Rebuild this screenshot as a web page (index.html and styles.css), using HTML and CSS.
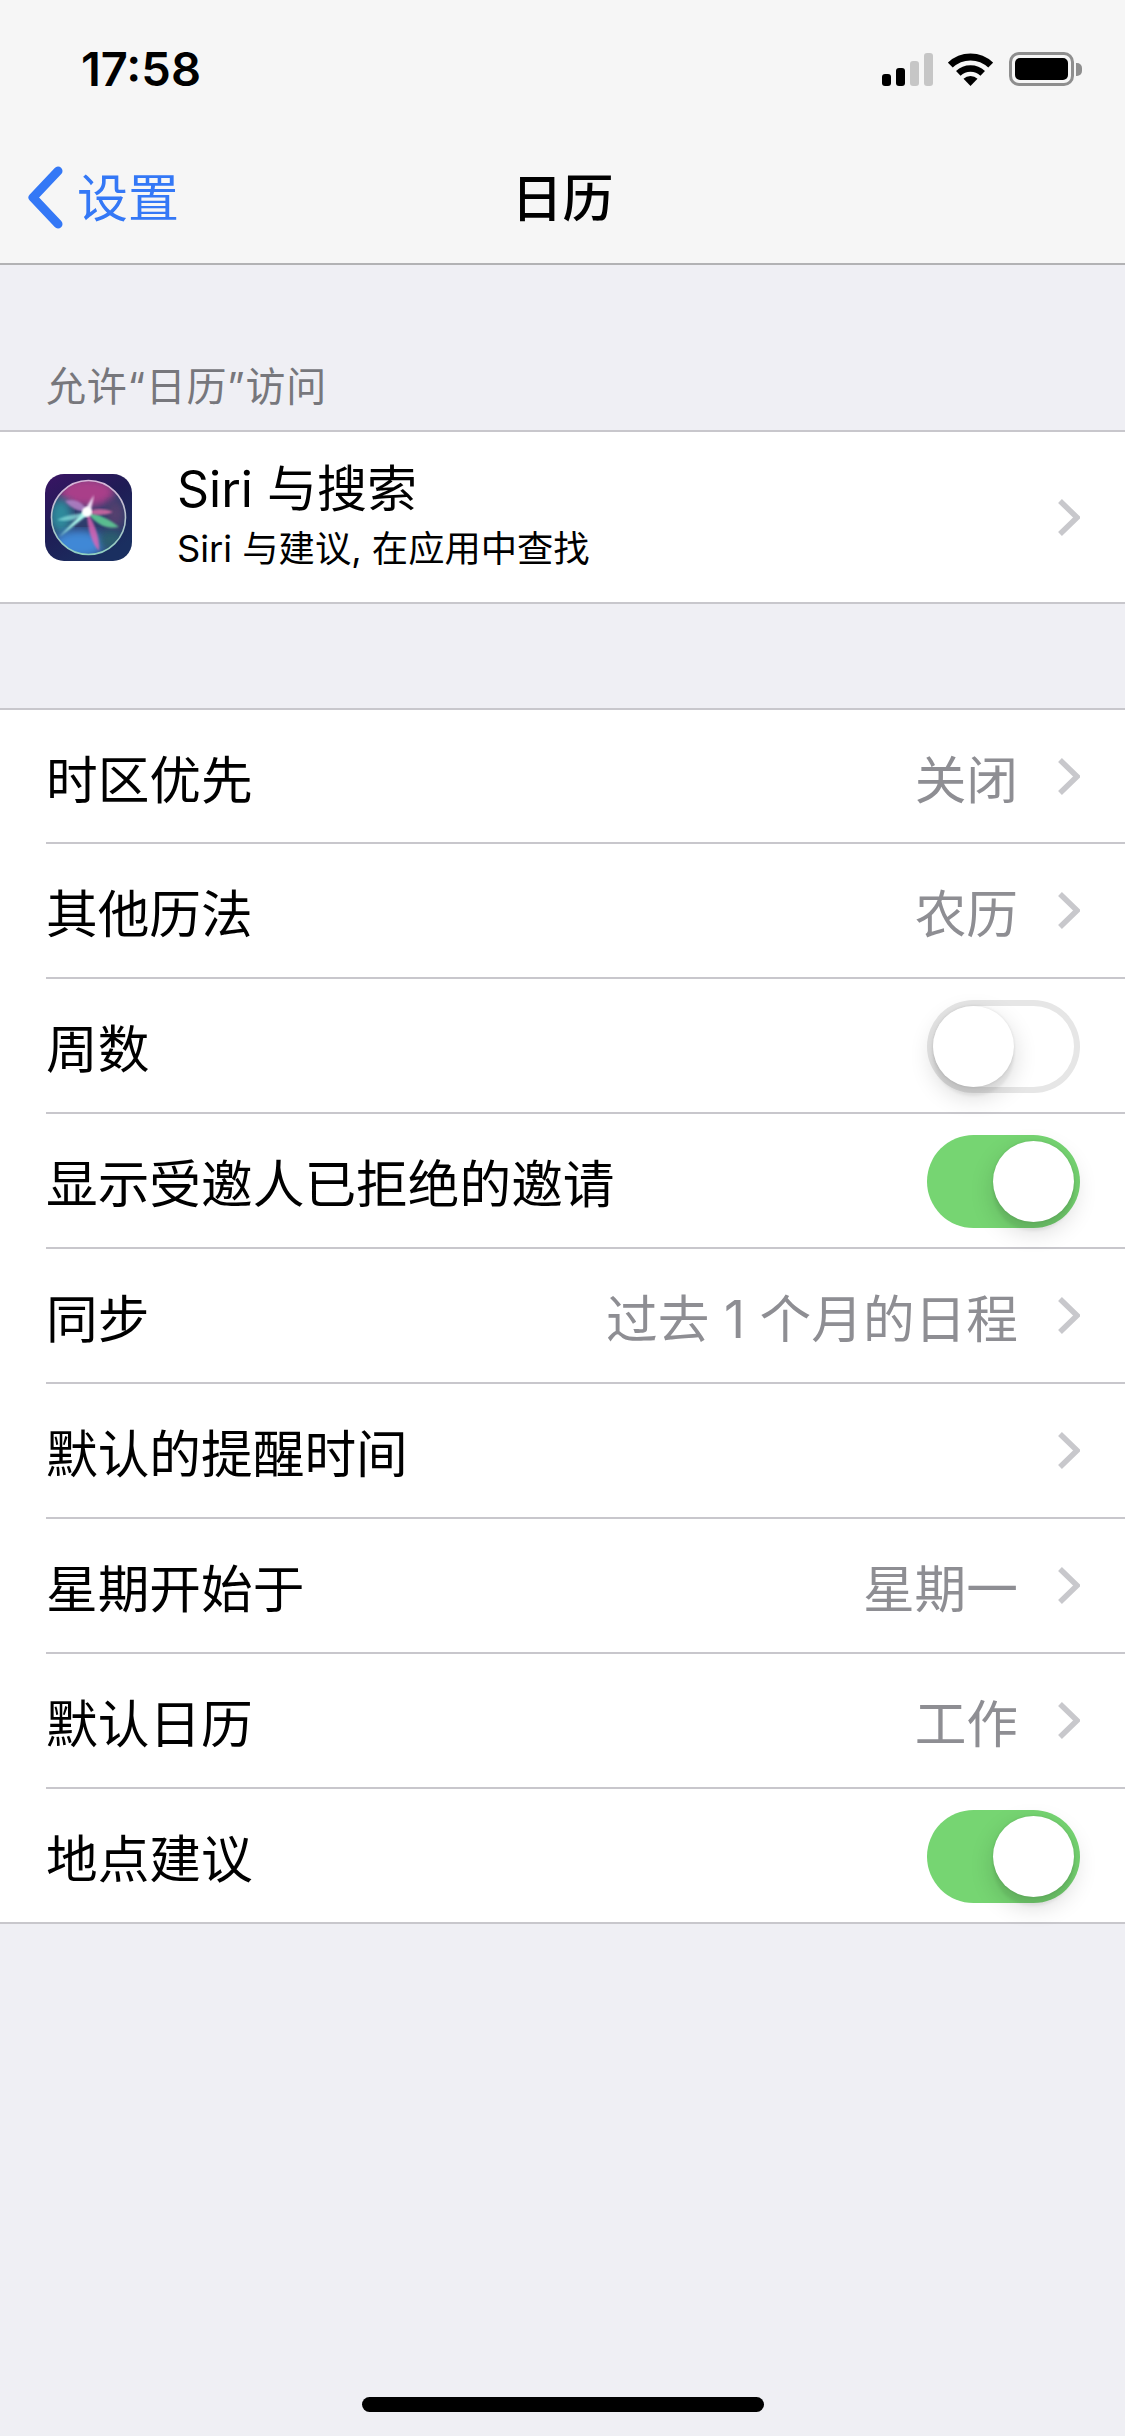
FILE: index.html
```html
<!DOCTYPE html>
<html lang="zh-CN">
<head>
    <meta charset="UTF-8">
    <title>日历</title>
    <link rel="stylesheet" href="styles.css">
</head>
<body>
<div class="page">

    <!-- Status bar + nav -->
    <header class="top">
        <div class="status">
            <span class="time">17:58</span>
            <div class="status-icons">
                <div class="signal">
                    <i class="bar bar-1"></i>
                    <i class="bar bar-2"></i>
                    <i class="bar bar-3"></i>
                    <i class="bar bar-4"></i>
                </div>
                <svg class="wifi" viewBox="0 0 45 33" width="45" height="33">
                    <path d="M2.3 12.1A29 29 0 0 1 42.7 12.1" fill="none" stroke="#000" stroke-width="7"/>
                    <path d="M10.3 20.4A17.5 17.5 0 0 1 34.7 20.4" fill="none" stroke="#000" stroke-width="6.5"/>
                    <path d="M22.5 33L15.5 25.8A10 10 0 0 1 29.5 25.8Z" fill="#000"/>
                </svg>
                <div class="battery">
                    <div class="battery-body"><div class="battery-fill"></div></div>
                    <div class="battery-cap"></div>
                </div>
            </div>
        </div>
        <nav class="nav">
            <div class="back">
                <svg class="back-arrow" viewBox="0 0 36 63" width="36" height="63">
                    <path d="M31 5L6 31.5L31 58" fill="none" stroke="#3478f6" stroke-width="9" stroke-linecap="round" stroke-linejoin="round"/>
                </svg>
                <span class="back-text">设置</span>
            </div>
            <h1 class="nav-title">日历</h1>
        </nav>
    </header>

    <main class="content">
        <div class="section-label">允许“日历”访问</div>
        <section class="group">
            <div class="siri-row">
                <svg class="siri-icon" viewBox="0 0 87 87" width="87" height="87">
                    <defs>
                        <linearGradient id="siriBg" x1="0" y1="0" x2="0.6" y2="1">
                            <stop offset="0" stop-color="#3a1464"/>
                            <stop offset="0.5" stop-color="#1f1c55"/>
                            <stop offset="1" stop-color="#1a2f60"/>
                        </linearGradient>
                        <linearGradient id="siriRing" x1="0" y1="0" x2="0" y2="1">
                            <stop offset="0" stop-color="#d8b4d8"/>
                            <stop offset="1" stop-color="#8fd0c0"/>
                        </linearGradient>
                        <filter id="blur4"><feGaussianBlur stdDeviation="4"/></filter>
                        <filter id="blur1"><feGaussianBlur stdDeviation="1.2"/></filter>
                        <filter id="blur05"><feGaussianBlur stdDeviation="0.8"/></filter>
                        <clipPath id="orbClip"><circle cx="43.5" cy="43.5" r="37"/></clipPath>
                    </defs>
                    <rect width="87" height="87" rx="19" fill="url(#siriBg)"/>
                    <circle cx="43.5" cy="43.5" r="37" fill="#2d3c6c"/>
                    <g clip-path="url(#orbClip)">
                        <ellipse cx="42" cy="18" rx="28" ry="15" fill="#c0408f" opacity="0.85" filter="url(#blur4)"/>
                        <ellipse cx="16" cy="42" rx="11" ry="17" fill="#2d8a9c" filter="url(#blur4)"/>
                        <ellipse cx="34" cy="70" rx="26" ry="14" fill="#3f88d6" filter="url(#blur4)"/>
                        <ellipse cx="70" cy="40" rx="9" ry="14" fill="#55406e" filter="url(#blur4)"/>
                        <ellipse cx="66" cy="66" rx="12" ry="10" fill="#2a5f70" filter="url(#blur4)"/>
                        <path d="M20 27C30 24 38 28 43 38C34 38 26 34 20 27Z" fill="#b184c8" opacity="0.85" filter="url(#blur1)"/>
                        <path d="M42 38C54 40 66 46 74 53C62 56 50 50 42 38Z" fill="#5fcb94" opacity="0.9" filter="url(#blur1)"/>
                        <path d="M42 38C50 50 55 64 54 77C47 70 42 54 42 38Z" fill="#e463b4" opacity="0.8" filter="url(#blur1)"/>
                        <path d="M42 38C50 34 60 34 68 38C60 42 50 42 42 38Z" fill="#ef73ad" opacity="0.75" filter="url(#blur1)"/>
                        <path d="M12 46C22 41 32 39 42 39C34 46 22 48 12 46Z" fill="#8fe7e2" opacity="0.7" filter="url(#blur1)"/>
                        <path d="M14 63L40 36L44 40Z" fill="#a9f5ea" filter="url(#blur05)"/>
                        <path d="M49 21L39 37L45 40Z" fill="#f1e2f7" filter="url(#blur05)"/>
                        <circle cx="42" cy="38" r="5" fill="#fff" filter="url(#blur1)"/>
                    </g>
                    <circle cx="43.5" cy="43.5" r="37" fill="none" stroke="url(#siriRing)" stroke-width="1.6"/>
                </svg>
                <div class="siri-text">
                    <div class="siri-title">Siri 与搜索</div>
                    <div class="siri-sub">Siri 与建议, 在应用中查找</div>
                </div>
                <svg class="chev" viewBox="0 0 23 39" width="23" height="39"><path d="M3 3L20 19.5L3 36" fill="none" stroke="#c8c8cc" stroke-width="5.5"/></svg>
            </div>
        </section>

        <section class="group group-list">
            <div class="row">
                <span class="row-label">时区优先</span>
                <span class="row-value">关闭</span>
                <svg class="chev" viewBox="0 0 23 39" width="23" height="39"><path d="M3 3L20 19.5L3 36" fill="none" stroke="#c8c8cc" stroke-width="5.5"/></svg>
            </div>
            <div class="row">
                <span class="row-label">其他历法</span>
                <span class="row-value">农历</span>
                <svg class="chev" viewBox="0 0 23 39" width="23" height="39"><path d="M3 3L20 19.5L3 36" fill="none" stroke="#c8c8cc" stroke-width="5.5"/></svg>
            </div>
            <div class="row">
                <span class="row-label">周数</span>
                <div class="toggle"><div class="knob"></div></div>
            </div>
            <div class="row">
                <span class="row-label">显示受邀人已拒绝的邀请</span>
                <div class="toggle toggle-on"><div class="knob"></div></div>
            </div>
            <div class="row">
                <span class="row-label">同步</span>
                <span class="row-value">过去 1 个月的日程</span>
                <svg class="chev" viewBox="0 0 23 39" width="23" height="39"><path d="M3 3L20 19.5L3 36" fill="none" stroke="#c8c8cc" stroke-width="5.5"/></svg>
            </div>
            <div class="row">
                <span class="row-label">默认的提醒时间</span>
                <svg class="chev" viewBox="0 0 23 39" width="23" height="39"><path d="M3 3L20 19.5L3 36" fill="none" stroke="#c8c8cc" stroke-width="5.5"/></svg>
            </div>
            <div class="row">
                <span class="row-label">星期开始于</span>
                <span class="row-value">星期一</span>
                <svg class="chev" viewBox="0 0 23 39" width="23" height="39"><path d="M3 3L20 19.5L3 36" fill="none" stroke="#c8c8cc" stroke-width="5.5"/></svg>
            </div>
            <div class="row">
                <span class="row-label">默认日历</span>
                <span class="row-value">工作</span>
                <svg class="chev" viewBox="0 0 23 39" width="23" height="39"><path d="M3 3L20 19.5L3 36" fill="none" stroke="#c8c8cc" stroke-width="5.5"/></svg>
            </div>
            <div class="row">
                <span class="row-label">地点建议</span>
                <div class="toggle toggle-on"><div class="knob"></div></div>
            </div>
        </section>
    </main>

    <div class="home-area"><div class="home-bar"></div></div>
</div>
</body>
</html>
```

FILE: styles.css
```css
body {
    margin: 0;
    font-family: Inter, "Noto Sans CJK SC", sans-serif;
    color: #000;
    background-color: #efeff4;
}
.page {
    width: 1125px;
    height: 2436px;
    display: flex;
    flex-direction: column;
    overflow: hidden;
}

/* Status bar + nav */
.top {
    background-color: #f6f6f6;
    border-bottom: 2px solid #b2b2b4;
    height: 265px;
    box-sizing: border-box;
}
.status {
    height: 132px;
    padding: 45px 43px 0 81px;
    box-sizing: border-box;
    display: flex;
    justify-content: space-between;
    align-items: flex-start;
}
.time {
    font-size: 47px;
    line-height: 48px;
    font-weight: 600;
}
.status-icons {
    display: flex;
    align-items: flex-end;
    margin-top: 7px;
}
.signal {
    display: flex;
    align-items: flex-end;
    gap: 5px;
    height: 33px;
    margin-right: 15px;
}
.bar {
    display: block;
    width: 9px;
    border-radius: 3px;
    background-color: #000;
}
.bar-1 { height: 12px; }
.bar-2 { height: 18px; }
.bar-3 { height: 25px; background-color: #c6c6c6; }
.bar-4 { height: 33px; background-color: #c6c6c6; }
.battery {
    display: flex;
    align-items: center;
    margin-left: 16px;
}
.battery-body {
    width: 65px;
    height: 34px;
    box-sizing: border-box;
    border: 3px solid #8e8e8e;
    border-radius: 10px;
    padding: 3px;
}
.battery-fill {
    height: 100%;
    background-color: #000;
    border-radius: 5px;
}
.battery-cap {
    width: 6px;
    height: 13px;
    margin-left: 2px;
    background-color: #8e8e8e;
    border-radius: 0 5px 5px 0;
}
.nav {
    height: 131px;
    display: grid;
    grid-template-columns: 1fr auto 1fr;
    align-items: center;
}
.back {
    display: flex;
    align-items: center;
    padding-left: 27px;
    gap: 14px;
    font-size: 51px;
    color: #3478f6;
}
.back-arrow {
    display: block;
}
.back-text {
    padding-bottom: 5px;
}
.nav-title {
    margin: 0;
    padding-bottom: 5px;
    font-size: 51px;
    font-weight: 500;
}

/* Lists */
.content {
    flex: 1;
}
.section-label {
    height: 165px;
    box-sizing: border-box;
    padding: 0 46px 18px;
    display: flex;
    align-items: flex-end;
    font-size: 40px;
    line-height: 50px;
    letter-spacing: 0.7px;
    color: #77777c;
}
.group {
    background-color: #fff;
    border-top: 2px solid #c8c7cc;
    border-bottom: 2px solid #c8c7cc;
}
.group-list {
    margin-top: 104px;
}
.siri-row {
    height: 170px;
    display: flex;
    align-items: center;
    padding: 0 45px;
}
.siri-icon {
    display: block;
    flex: none;
    margin-right: 45px;
}
.siri-text {
    flex: 1;
    padding-bottom: 5px;
}
.siri-title {
    font-size: 50px;
    line-height: 69px;
}
.siri-sub {
    font-size: 36.3px;
    line-height: 50px;
}
.chev {
    display: block;
    flex: none;
}
.row {
    height: 135px;
    box-sizing: border-box;
    margin-left: 46px;
    padding-right: 45px;
    border-bottom: 2px solid #c8c7cc;
    display: flex;
    align-items: center;
}
.row:first-child {
    height: 134px;
}
.row:last-child {
    border-bottom: none;
    height: 133px;
}
.row-label {
    flex: 1;
    font-size: 51.7px;
}
.row-value {
    font-size: 51.7px;
    color: #8e8e93;
    margin-right: 39px;
}

/* Switches */
.toggle {
    width: 153px;
    height: 93px;
    box-sizing: border-box;
    margin-top: 2px;
    padding: 6px;
    border-radius: 47px;
    display: flex;
    box-shadow: inset 0 0 0 6px #e6e6e6;
    background-color: #fff;
}
.toggle-on {
    background-color: #76d572;
    box-shadow: none;
    justify-content: flex-end;
}
.knob {
    width: 81px;
    height: 81px;
    border-radius: 50%;
    background-color: #fff;
    box-shadow: 0 9px 24px rgba(0, 0, 0, 0.16), 0 9px 3px rgba(0, 0, 0, 0.06), 0 0 3px rgba(0, 0, 0, 0.1);
}

.home-area {
    padding-bottom: 24px;
    display: flex;
    justify-content: center;
}
.home-bar {
    width: 402px;
    height: 15px;
    border-radius: 8px;
    background-color: #000;
}
```
